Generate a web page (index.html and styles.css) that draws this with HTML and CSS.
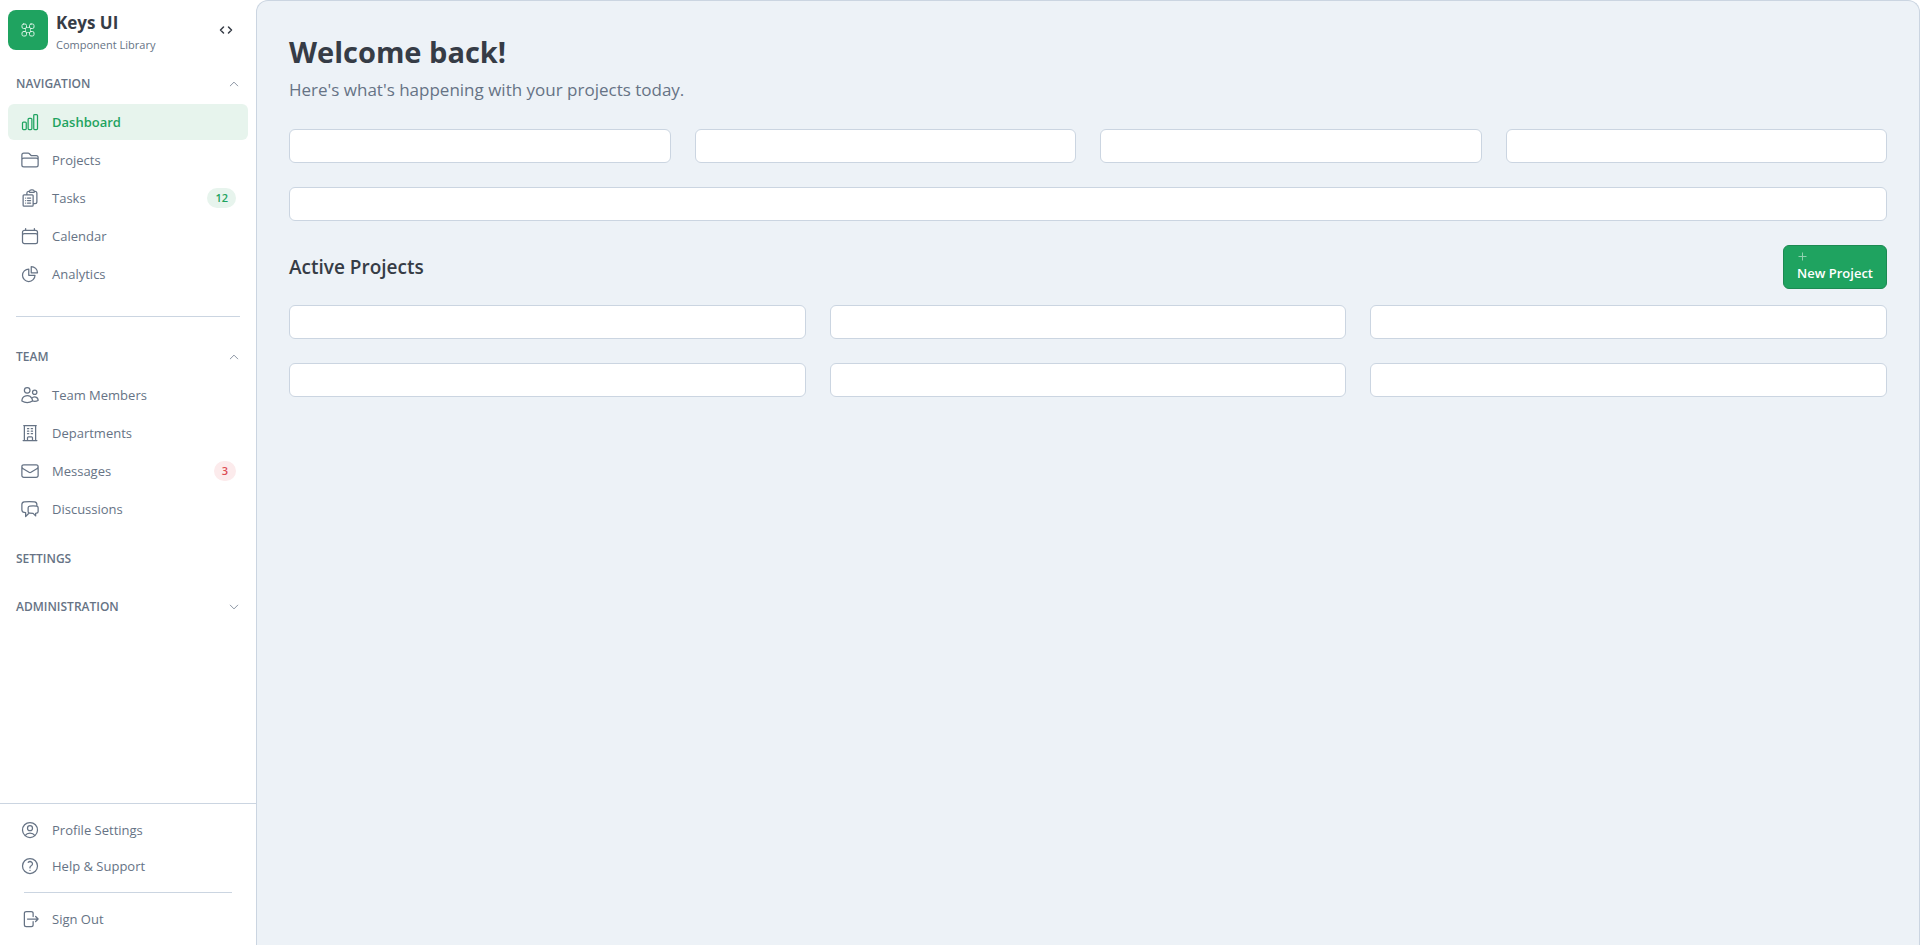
FILE: index.html
```html
<!DOCTYPE html>
<html lang="en">
<head>
<meta charset="utf-8">
<meta name="viewport" content="width=device-width, initial-scale=1">
<title>Keys UI</title>
<link rel="stylesheet" href="styles.css">
</head>
<body>
<div class="shell">
  <aside class="sidebar">
    <header class="brand">
      <span class="brand-mark">
        <svg class="icon icon-sm" viewBox="0 0 24 24" aria-hidden="true"><rect x="3" y="3" width="6.75" height="6.75" rx="2.25"/><rect x="14.25" y="3" width="6.75" height="6.75" rx="2.25"/><rect x="3" y="14.25" width="6.75" height="6.75" rx="2.25"/><rect x="14.25" y="14.25" width="6.75" height="6.75" rx="2.25"/><path d="M9.75 8.25h4.5M9.75 15.75h4.5M8.25 9.75v4.5M15.75 9.75v4.5" stroke-width="1"/></svg>
      </span>
      <div class="brand-text">
        <span class="brand-name">Keys UI</span>
        <span class="brand-sub">Component Library</span>
      </div>
      <button class="toggle" type="button" aria-label="Toggle sidebar">
        <svg class="icon icon-sm" viewBox="0 0 16 16" aria-hidden="true"><path d="M5.5 5 2.5 8l3 3M10.5 5l3 3-3 3"/></svg>
      </button>
    </header>

    <nav class="nav" aria-label="Main">
      <section class="group">
        <button class="group-head" type="button" aria-expanded="true">Navigation
          <svg class="icon icon-xs" viewBox="0 0 24 24" aria-hidden="true"><path d="m4.5 15.75 7.5-7.5 7.5 7.5"/></svg>
        </button>
        <div class="group-list">
          <a class="item active" href="#"><svg class="icon" viewBox="0 0 24 24" aria-hidden="true"><path d="M3 13.125C3 12.504 3.504 12 4.125 12h2.25c.621 0 1.125.504 1.125 1.125v6.75C7.5 20.496 6.996 21 6.375 21h-2.25A1.125 1.125 0 0 1 3 19.875v-6.75ZM9.75 8.625c0-.621.504-1.125 1.125-1.125h2.25c.621 0 1.125.504 1.125 1.125v11.25c0 .621-.504 1.125-1.125 1.125h-2.25a1.125 1.125 0 0 1-1.125-1.125V8.625ZM16.5 4.125c0-.621.504-1.125 1.125-1.125h2.25C20.496 3 21 3.504 21 4.125v15.75c0 .621-.504 1.125-1.125 1.125h-2.25a1.125 1.125 0 0 1-1.125-1.125V4.125Z"/></svg>Dashboard</a>
          <a class="item" href="#"><svg class="icon" viewBox="0 0 24 24" aria-hidden="true"><path d="M2.25 12.75V12A2.25 2.25 0 0 1 4.5 9.75h15A2.25 2.25 0 0 1 21.75 12v.75m-8.69-6.44-2.12-2.12a1.5 1.5 0 0 0-1.061-.44H4.5A2.25 2.25 0 0 0 2.25 6v12a2.25 2.25 0 0 0 2.25 2.25h15A2.25 2.25 0 0 0 21.75 18V9a2.25 2.25 0 0 0-2.25-2.25h-5.379a1.5 1.5 0 0 1-1.06-.44Z"/></svg>Projects</a>
          <a class="item" href="#"><svg class="icon" viewBox="0 0 24 24" aria-hidden="true"><path d="M9 12h3.75M9 15h3.75M9 18h3.75m3 .75H18a2.25 2.25 0 0 0 2.25-2.25V6.108c0-1.135-.845-2.098-1.976-2.192a48.424 48.424 0 0 0-1.123-.08m-5.801 0c-.065.21-.1.433-.1.664 0 .414.336.75.75.75h4.5a.75.75 0 0 0 .75-.75 2.25 2.25 0 0 0-.1-.664m-5.8 0A2.251 2.251 0 0 1 13.5 2.25H15c1.012 0 1.867.668 2.15 1.586m-5.8 0c-.376.023-.75.05-1.124.08C9.095 4.01 8.25 4.973 8.25 6.108V8.25m0 0H4.875c-.621 0-1.125.504-1.125 1.125v11.25c0 .621.504 1.125 1.125 1.125h9.75c.621 0 1.125-.504 1.125-1.125V9.375c0-.621-.504-1.125-1.125-1.125H8.25ZM6.75 12h.008v.008H6.75V12Zm0 3h.008v.008H6.75V15Zm0 3h.008v.008H6.75V18Z"/></svg>Tasks<span class="badge badge-green">12</span></a>
          <a class="item" href="#"><svg class="icon" viewBox="0 0 24 24" aria-hidden="true"><path d="M6.75 3v2.25M17.25 3v2.25M3 18.75V7.5a2.25 2.25 0 0 1 2.25-2.25h13.5A2.25 2.25 0 0 1 21 7.5v11.25m-18 0A2.25 2.25 0 0 0 5.25 21h13.5A2.25 2.25 0 0 0 21 18.75m-18 0v-7.5A2.25 2.25 0 0 1 5.25 9h13.5A2.25 2.25 0 0 1 21 11.25v7.5"/></svg>Calendar</a>
          <a class="item" href="#"><svg class="icon" viewBox="0 0 24 24" aria-hidden="true"><path d="M10.5 6a7.5 7.5 0 1 0 7.5 7.5h-7.5V6Z"/><path d="M13.5 10.5H21A7.5 7.5 0 0 0 13.5 3v7.5Z"/></svg>Analytics</a>
        </div>
      </section>

      <hr class="rule">

      <section class="group">
        <button class="group-head" type="button" aria-expanded="true">Team
          <svg class="icon icon-xs" viewBox="0 0 24 24" aria-hidden="true"><path d="m4.5 15.75 7.5-7.5 7.5 7.5"/></svg>
        </button>
        <div class="group-list">
          <a class="item" href="#"><svg class="icon" viewBox="0 0 24 24" aria-hidden="true"><path d="M15 19.128a9.38 9.38 0 0 0 2.625.372 9.337 9.337 0 0 0 4.121-.952 4.125 4.125 0 0 0-7.533-2.493M15 19.128v-.003c0-1.113-.285-2.16-.786-3.07M15 19.128v.106A12.318 12.318 0 0 1 8.624 21c-2.331 0-4.512-.645-6.374-1.766l-.001-.109a6.375 6.375 0 0 1 11.964-3.07M12 6.375a3.375 3.375 0 1 1-6.75 0 3.375 3.375 0 0 1 6.75 0Zm8.25 2.25a2.625 2.625 0 1 1-5.25 0 2.625 2.625 0 0 1 5.25 0Z"/></svg>Team Members</a>
          <a class="item" href="#"><svg class="icon" viewBox="0 0 24 24" aria-hidden="true"><path d="M3.75 21h16.5M4.5 3h15M5.25 3v18m13.5-18v18M9 6.75h1.5m-1.5 3h1.5m-1.5 3h1.5m3-6H15m-1.5 3H15m-1.5 3H15M9 21v-3.375c0-.621.504-1.125 1.125-1.125h3.75c.621 0 1.125.504 1.125 1.125V21"/></svg>Departments</a>
          <a class="item" href="#"><svg class="icon" viewBox="0 0 24 24" aria-hidden="true"><path d="M21.75 6.75v10.5a2.25 2.25 0 0 1-2.25 2.25h-15a2.25 2.25 0 0 1-2.25-2.25V6.75m19.5 0A2.25 2.25 0 0 0 19.5 4.5h-15a2.25 2.25 0 0 0-2.25 2.25m19.5 0v.243a2.25 2.25 0 0 1-1.07 1.916l-7.5 4.615a2.25 2.25 0 0 1-2.36 0L3.32 8.91a2.25 2.25 0 0 1-1.07-1.916V6.75"/></svg>Messages<span class="badge badge-red">3</span></a>
          <a class="item" href="#"><svg class="icon" viewBox="0 0 24 24" aria-hidden="true"><path d="M20.25 8.511c.884.284 1.5 1.128 1.5 2.097v4.286c0 1.136-.847 2.1-1.98 2.193-.34.027-.68.052-1.02.072v3.091l-3-3c-1.354 0-2.694-.055-4.02-.163a2.115 2.115 0 0 1-.825-.242m9.345-8.334a2.126 2.126 0 0 0-.476-.095 48.64 48.64 0 0 0-8.048 0c-1.131.094-1.976 1.057-1.976 2.192v4.286c0 .837.46 1.58 1.155 1.951m9.345-8.334V6.637c0-1.621-1.152-3.026-2.76-3.235A48.455 48.455 0 0 0 11.25 3c-2.115 0-4.198.137-6.24.402-1.608.209-2.76 1.614-2.76 3.235v6.226c0 1.621 1.152 3.026 2.76 3.235.577.075 1.157.14 1.74.194V21l4.155-4.155"/></svg>Discussions</a>
        </div>
      </section>

      <h2 class="group-head">Settings</h2>

      <button class="group-head" type="button" aria-expanded="false">Administration
        <svg class="icon icon-xs" viewBox="0 0 24 24" aria-hidden="true"><path d="m19.5 8.25-7.5 7.5-7.5-7.5"/></svg>
      </button>
    </nav>

    <footer class="account">
      <a class="item" href="#"><svg class="icon" viewBox="0 0 24 24" aria-hidden="true"><path d="M17.982 18.725A7.488 7.488 0 0 0 12 15.75a7.488 7.488 0 0 0-5.982 2.975m11.963 0a9 9 0 1 0-11.963 0m11.963 0A8.966 8.966 0 0 1 12 21a8.966 8.966 0 0 1-5.982-2.275M15 9.75a3 3 0 1 1-6 0 3 3 0 0 1 6 0Z"/></svg>Profile Settings</a>
      <a class="item" href="#"><svg class="icon" viewBox="0 0 24 24" aria-hidden="true"><path d="M9.879 7.519c1.171-1.025 3.071-1.025 4.242 0 1.172 1.025 1.172 2.687 0 3.712-.203.179-.43.326-.67.442-.745.361-1.45.999-1.45 1.827v.75M21 12a9 9 0 1 1-18 0 9 9 0 0 1 18 0Zm-9 5.25h.008v.008H12v-.008Z"/></svg>Help &amp; Support</a>
      <hr class="account-rule">
      <a class="item" href="#"><svg class="icon" viewBox="0 0 24 24" aria-hidden="true"><path d="M15.75 9V5.25A2.25 2.25 0 0 0 13.5 3h-6a2.25 2.25 0 0 0-2.25 2.25v13.5A2.25 2.25 0 0 0 7.5 21h6a2.25 2.25 0 0 0 2.25-2.25V15m3 0 3-3m0 0-3-3m3 3H9"/></svg>Sign Out</a>
    </footer>
  </aside>

  <main class="main">
    <header class="intro">
      <h1 class="title">Welcome back!</h1>
      <p class="lead">Here's what's happening with your projects today.</p>
    </header>
    <div class="grid grid-4">
      <div class="card"></div><div class="card"></div><div class="card"></div><div class="card"></div>
    </div>
    <div class="card"></div>
    <section class="projects">
      <div class="projects-head">
        <h2 class="subtitle">Active Projects</h2>
        <button class="primary" type="button">
          <svg class="icon icon-plus" viewBox="0 0 12 12" aria-hidden="true"><path d="M5.5 1.5v8M1.5 5.5h8"/></svg>
          <span>New Project</span>
        </button>
      </div>
      <div class="grid grid-3">
        <div class="card"></div><div class="card"></div><div class="card"></div>
        <div class="card"></div><div class="card"></div><div class="card"></div>
      </div>
    </section>
  </main>
</div>
</body>
</html>
```
FILE: styles.css
```css
:root {
  --green: #1fa360;
  --green-soft: #e7f4ed;
  --line: #cbd5e1;
  --text: #363c46;
  --muted: #667385;
}

* { box-sizing: border-box; }

body {
  margin: 0;
  background: #fff;
  color: var(--text);
  font: 13px/20px "Segoe UI", "Open Sans", "Noto Sans", sans-serif;
}

h1, h2, p { margin: 0; }

button {
  border: 0;
  background: none;
  color: inherit;
  font: inherit;
  cursor: pointer;
}

.shell {
  display: grid;
  grid-template-columns: 256px 1fr;
  min-height: 100vh;
}

.sidebar {
  display: flex;
  flex-direction: column;
}

.icon {
  flex: none;
  width: 20px;
  height: 20px;
  fill: none;
  stroke: currentColor;
  stroke-width: 1.5;
  stroke-linecap: round;
  stroke-linejoin: round;
}

.icon-sm { width: 16px; height: 16px; }
.icon-xs { width: 12px; height: 12px; }

.brand {
  display: flex;
  align-items: center;
  gap: 8px;
  height: 64px;
  padding: 0 8px 4px;
}

.brand-mark {
  display: grid;
  place-items: center;
  width: 40px;
  height: 40px;
  border-radius: 8px;
  background: var(--green);
  color: #d9f2e4;
}

.brand-text {
  display: flex;
  flex: 1;
  flex-direction: column;
  padding-top: 6px;
}

.brand-name {
  font-size: 17px;
  font-weight: 700;
  line-height: 24px;
}

.brand-sub {
  color: var(--muted);
  font-size: 11px;
  line-height: 20px;
}

.toggle {
  display: grid;
  place-items: center;
  width: 44px;
  height: 44px;
  padding: 0;
  border-radius: 6px;
}

.nav {
  display: flex;
  flex: 1;
  flex-direction: column;
  gap: 8px;
  padding: 0 8px;
}

.group-head {
  display: flex;
  align-items: center;
  justify-content: space-between;
  width: 100%;
  height: 40px;
  padding: 0 8px;
  color: var(--muted);
  font-size: 12px;
  font-weight: 600;
  text-transform: uppercase;
}

.group-list {
  display: flex;
  flex-direction: column;
  gap: 2px;
  padding-bottom: 4px;
}

.item {
  display: flex;
  align-items: center;
  gap: 12px;
  height: 36px;
  padding: 0 12px;
  border-radius: 6px;
  color: var(--muted);
  text-decoration: none;
}

.item.active {
  background: var(--green-soft);
  color: var(--green);
  font-weight: 600;
}

.badge {
  margin-left: auto;
  padding: 0 8px;
  border-radius: 10px;
  font-size: 11px;
  font-weight: 600;
}

.badge-green { background: var(--green-soft); color: var(--green); }
.badge-red { background: #fcebec; color: #dc4c54; }

.rule {
  width: auto;
  height: 1px;
  margin: 12px 8px;
  border: 0;
  background: var(--line);
}

.account {
  padding: 8px;
  border-top: 1px solid var(--line);
}

.account-rule {
  height: 1px;
  margin: 8px 16px;
  border: 0;
  background: var(--line);
}

.main {
  display: flex;
  flex-direction: column;
  gap: 24px;
  padding: 32px;
  border: 1px solid var(--line);
  border-bottom: 0;
  border-radius: 12px 12px 0 0;
  background: #edf2f7;
}

.intro {
  display: flex;
  flex-direction: column;
  gap: 4px;
}

.title {
  font-size: 29px;
  font-weight: 700;
  line-height: 38px;
}

.lead {
  color: var(--muted);
  font-size: 17px;
  line-height: 30px;
}

.grid {
  display: grid;
  gap: 24px;
}

.grid-4 { grid-template-columns: repeat(4, 1fr); }
.grid-3 { grid-template-columns: repeat(3, 1fr); }

.card {
  padding: 16px;
  border: 1px solid var(--line);
  border-radius: 6px;
  background: #fff;
}

.projects {
  display: flex;
  flex-direction: column;
  gap: 16px;
}

.projects-head {
  display: flex;
  align-items: center;
  justify-content: space-between;
}

.subtitle {
  font-size: 19px;
  font-weight: 600;
  line-height: 28px;
}

.primary {
  display: flex;
  flex-direction: column;
  padding: 5px 13px;
  border: 1px solid #1c8a52;
  border-radius: 6px;
  background: var(--green);
  color: #fff;
  font-weight: 600;
}

.icon-plus {
  width: 12px;
  height: 12px;
  stroke: #8fd1af;
  stroke-width: 1;
  stroke-linecap: butt;
}
```
